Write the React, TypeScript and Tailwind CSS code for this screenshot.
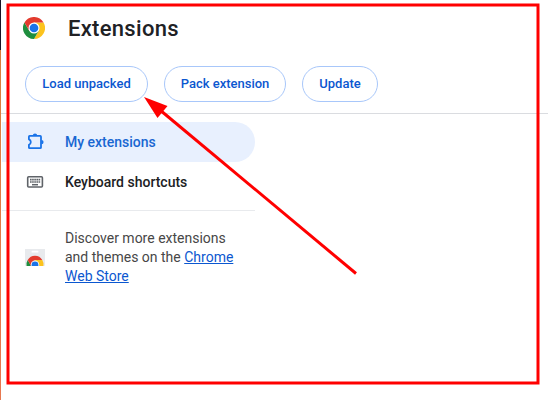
import React from "react";

function ChromeLogo({ className }: { className: string }) {
  return (
    <svg className={className} viewBox="0 0 48 48">
      <path d="M24 12 H44.8 A24 24 0 0 1 24 48 L34.4 30 Z" fill="#fcc31e" />
      <path d="M13.6 30 L3.2 12 A24 24 0 0 0 24 48 L34.4 30 Z" fill="#1e8e3e" />
      <path d="M3.2 12 A24 24 0 0 1 44.8 12 H24 L13.6 30 Z" fill="#e33b2e" />
      <circle cx="24" cy="24" r="12" fill="#fff" />
      <circle cx="24" cy="24" r="9.5" fill="#1a73e8" />
    </svg>
  );
}

function PuzzleIcon() {
  return (
    <svg className="size-5" viewBox="0 0 20 20" fill="none">
      <path
        d="M4.6 3.9H15.2Q16 3.9 16 4.7V15.4Q16 16.2 15.2 16.2H4.6Q3.9 16.2 3.9 15.4V12.9Q5.8 12.2 5.8 10.1T3.9 7.3V4.7Q3.9 3.9 4.6 3.9Z"
        stroke="#1a73e8"
        strokeWidth="1.8"
        strokeLinejoin="round"
      />
      <path d="M7.8 3.6a2.2 2.2 0 0 1 4.4 0ZM16.4 7.9a2.2 2.2 0 0 1 0 4.4Z" fill="#1a73e8" />
    </svg>
  );
}

function KeyboardIcon() {
  return (
    <svg className="size-5" viewBox="0 0 20 20" fill="none">
      <rect x="2.7" y="4.8" width="14.7" height="10.2" rx="1" stroke="#5f6368" strokeWidth="1.6" />
      <path d="M5 7.6H15.2M5 10H15.2" stroke="#5f6368" strokeWidth="1.7" strokeDasharray="1.65 .48" />
      <path d="M7 12.7H13" stroke="#5f6368" strokeWidth="1.5" />
    </svg>
  );
}

function StoreIcon() {
  return (
    <svg className="h-[17px] w-5" viewBox="0 0 20 17">
      <path d="M0 0H20V16a1 1 0 0 1-1 1H1a1 1 0 0 1-1-1Z" fill="#e8eaed" />
      <rect x="6.5" y="1.8" width="7" height="1.8" rx=".9" fill="#fff" />
      <path d="M1.6 17A8.4 8.4 0 0 1 2.7 11L6.2 17Z" fill="#1e8e3e" />
      <path d="M2.7 11A8.4 8.4 0 0 1 17.3 11H10L6 17Z" fill="#e33b2e" />
      <path d="M10 11H17.3A8.4 8.4 0 0 1 18.4 17H10Z" fill="#fcc31e" />
      <path d="M5.8 17V15.6a4.2 4.2 0 0 1 8.4 0V17Z" fill="#fff" />
      <path d="M6.6 17V15.8a3.4 3.4 0 0 1 6.8 0V17Z" fill="#1a73e8" />
    </svg>
  );
}

function ToolbarButton({ label, width }: { label: string; width: string }) {
  return (
    <button
      className={`flex h-9 shrink-0 items-center justify-center rounded-full border border-[#a8c7fa] pb-px text-[13px] font-medium text-[#0b57d0] ${width}`}
    >
      {label}
    </button>
  );
}

export default function App() {
  return (
    <div className="relative flex h-[400px] w-[548px] overflow-hidden bg-white font-['Roboto',sans-serif] text-[#202124]">
      <div className="flex w-px shrink-0 flex-col">
        <div className="h-[50px] bg-[#171426]" />
        <div className="flex-1 bg-gradient-to-b from-[#d9823a] to-[#e87850]" />
      </div>
      <main className="flex min-w-0 flex-1 flex-col">
        <header className="flex h-14 items-center pl-[22px]">
          <ChromeLogo className="size-[22px]" />
          <h1 className="ml-[23px] pt-0.5 text-[22px] leading-7 font-medium tracking-[0.3px]">Extensions</h1>
        </header>
        <div className="flex h-[58px] gap-4 border-b border-[#dadce0] pt-2.5 pl-6">
          <ToolbarButton label="Load unpacked" width="w-[123px]" />
          <ToolbarButton label="Pack extension" width="w-[122px]" />
          <ToolbarButton label="Update" width="w-[76px]" />
        </div>
        <aside className="ml-px w-[253px] pt-2">
          <nav className="text-[14px] font-medium">
            <a className="flex h-10 items-center gap-5 rounded-r-full bg-[#e8f0fe] pl-[23px] text-[#1967d2]">
              <PuzzleIcon />
              My extensions
            </a>
            <a className="flex h-10 items-center gap-5 pl-[23px]">
              <KeyboardIcon />
              Keyboard shortcuts
            </a>
          </nav>
          <div className="mt-2 h-px bg-[#e8eaed]" />
          <div className="mt-[18px] flex items-center gap-5 pl-[23px]">
            <StoreIcon />
            <p className="text-[14px] leading-[19px] whitespace-nowrap text-[#474747]">
              Discover more extensions
              <br />
              and themes on the <a className="text-[#0b57d0] underline">Chrome</a>
              <br />
              <a className="text-[#0b57d0] underline">Web Store</a>
            </p>
          </div>
        </aside>
      </main>
      <svg className="pointer-events-none absolute inset-0" width="548" height="400" viewBox="0 0 548 400">
        <rect x="8" y="5" width="530" height="378" fill="none" stroke="#ff0000" strokeWidth="3" />
        <path d="M356 273.5L160 110" stroke="#ff0000" strokeWidth="3" />
        <path d="M144 97L167.5 106L157.5 118Z" fill="#ff0000" />
      </svg>
    </div>
  );
}
